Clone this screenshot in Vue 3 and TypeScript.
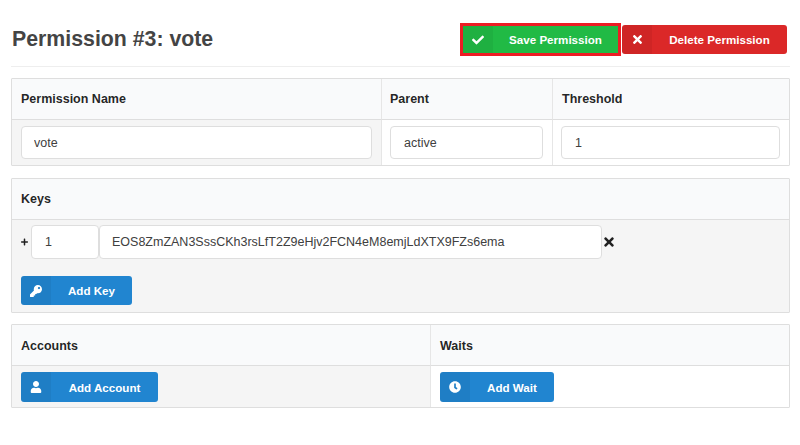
<script setup lang="ts">
interface Ic { box: string; d: string }
const check: Ic = { box: '0 0 512 512', d: 'M173.898 439.404l-166.4-166.400c-9.997-9.997-9.997-26.206 0-36.204l36.203-36.204c9.997-9.998 26.207-9.998 36.204 0L192 312.690 432.095 72.596c9.997-9.997 26.207-9.997 36.204 0l36.203 36.204c9.997 9.997 9.997 26.206 0 36.204l-294.400 294.401c-9.998 9.997-26.207 9.997-36.204-.001z' }
const times: Ic = { box: '0 0 352 512', d: 'M242.720 256l100.070-100.070c12.280-12.280 12.280-32.190 0-44.480l-22.240-22.240c-12.280-12.280-32.190-12.280-44.480 0L176 189.280 75.930 89.210c-12.280-12.280-32.190-12.280-44.480 0L9.210 111.450c-12.280 12.280-12.280 32.190 0 44.480L109.280 256 9.210 356.070c-12.280 12.280-12.280 32.190 0 44.480l22.240 22.240c12.280 12.280 32.200 12.280 44.480 0L176 322.720l100.070 100.070c12.280 12.280 32.200 12.280 44.480 0l22.240-22.240c12.280-12.280 12.280-32.190 0-44.480L242.720 256z' }
const key: Ic = { box: '0 0 512 512', d: 'M512 176.001C512 273.203 433.202 352 336 352c-11.22 0-22.19-1.062-32.827-3.069l-24.012 27.014A23.999 23.999 0 0 1 261.223 384H224v40c0 13.255-10.745 24-24 24h-40v40c0 13.255-10.745 24-24 24H24c-13.255 0-24-10.745-24-24v-78.059c0-6.365 2.529-12.47 7.029-16.971l161.802-161.802C163.108 213.814 160 195.271 160 176 160 78.798 238.797.001 335.999 0 433.488-.001 512 78.511 512 176.001zM336 128c0 26.510 21.490 48 48 48s48-21.490 48-48-21.490-48-48-48-48 21.490-48 48z' }
const user: Ic = { box: '0 0 448 512', d: 'M224 256c70.700 0 128-57.300 128-128S294.700 0 224 0 96 57.300 96 128s57.300 128 128 128zm89.600 32h-16.700c-22.200 10.200-46.900 16-72.900 16s-50.600-5.800-72.900-16h-16.700C60.200 288 0 348.200 0 422.400V464c0 26.500 21.500 48 48 48h352c26.500 0 48-21.500 48-48v-41.600c0-74.200-60.200-134.400-134.400-134.400z' }
const clock: Ic = { box: '0 0 512 512', d: 'M256 8C119 8 8 119 8 256s111 248 248 248 248-111 248-248S393 8 256 8zm57.100 350.100L224.900 294c-3.100-2.300-4.900-5.900-4.900-9.700V116c0-6.600 5.400-12 12-12h48c6.600 0 12 5.400 12 12v137.700l63.500 46.200c5.400 3.900 6.500 11.400 2.600 16.800l-28.200 38.800c-3.900 5.300-11.400 6.500-16.800 2.600z' }
const plus: Ic = { box: '0 0 448 512', d: 'M416 208H272V64c0-17.670-14.330-32-32-32h-32c-17.670 0-32 14.330-32 32v144H32c-17.670 0-32 14.330-32 32v32c0 17.670 14.330 32 32 32h144v144c0 17.670 14.330 32 32 32h32c17.670 0 32-14.330 32-32V304h144c17.670 0 32-14.330 32-32v-32c0-17.670-14.330-32-32-32z' }
</script>

<template>
  <div class="page">
    <header class="top">
      <h1 class="title">Permission #3: vote</h1>
      <div class="actions">
        <button class="btn green save" type="button">
          <span class="ico"><svg width="12" height="12" :viewBox="check.box"><path :d="check.d" fill="currentColor" /></svg></span>
          <span class="lbl">Save Permission</span>
        </button>
        <button class="btn red delete" type="button">
          <span class="ico"><svg width="9" height="13" :viewBox="times.box"><path :d="times.d" fill="currentColor" /></svg></span>
          <span class="lbl">Delete Permission</span>
        </button>
      </div>
    </header>

    <section class="panel grid-3">
      <div class="head">Permission Name</div>
      <div class="head sep parent">Parent</div>
      <div class="head sep">Threshold</div>
      <div class="cell shade"><input class="field" value="vote" readonly /></div>
      <div class="cell sep"><input class="field wide-pad" value="active" readonly /></div>
      <div class="cell sep"><input class="field wide-pad" value="1" readonly /></div>
    </section>

    <section class="panel keys">
      <div class="head">Keys</div>
      <div class="keys-body shade">
        <div class="key-row">
          <svg class="plus" width="7" height="8" :viewBox="plus.box"><path :d="plus.d" fill="currentColor" /></svg>
          <input class="field weight wide-pad" value="1" readonly />
          <input class="field pub" value="EOS8ZmZAN3SssCKh3rsLfT2Z9eHjv2FCN4eM8emjLdXTX9FZs6ema" readonly />
          <svg class="remove" width="10" height="14" :viewBox="times.box"><path :d="times.d" fill="currentColor" /></svg>
        </div>
        <button class="btn blue add-key" type="button">
          <span class="ico"><svg width="12" height="12" :viewBox="key.box"><path :d="key.d" fill="currentColor" /></svg></span>
          <span class="lbl">Add Key</span>
        </button>
      </div>
    </section>

    <section class="panel grid-2">
      <div class="head low-head">Accounts</div>
      <div class="head low-head sep">Waits</div>
      <div class="cell shade low">
        <button class="btn blue add-account" type="button">
          <span class="ico"><svg width="12" height="12" :viewBox="user.box"><path :d="user.d" fill="currentColor" /></svg></span>
          <span class="lbl">Add Account</span>
        </button>
      </div>
      <div class="cell sep low wait">
        <button class="btn blue add-wait" type="button">
          <span class="ico"><svg width="12" height="12" :viewBox="clock.box"><path :d="clock.d" fill="currentColor" /></svg></span>
          <span class="lbl">Add Wait</span>
        </button>
      </div>
    </section>
  </div>
</template>

<style>
html, body { margin: 0; background: #fff; }
</style>

<style scoped>
.page {
  box-sizing: border-box;
  width: 800px;
  height: 445px;
  padding: 0 10px 0 11px;
  font-family: "Liberation Sans", Arial, sans-serif;
  color: rgba(0, 0, 0, 0.87);
  overflow: hidden;
}
.top {
  display: flex;
  align-items: center;
  justify-content: space-between;
  box-sizing: content-box;
  height: 55px;
  padding-top: 11px;
  border-bottom: 1px solid #eeeeee;
  margin-bottom: 11px;
}
.title {
  margin: 0 0 0 1px;
  font-size: 21.3px;
  font-weight: 700;
  line-height: 26px;
  color: #444444;
}
.actions {
  display: flex;
  align-items: center;
  gap: 4px;
  margin-right: 3px;
  margin-top: 2px;
}
.btn {
  display: flex;
  align-items: stretch;
  padding: 0;
  border: 0;
  border-radius: 3px;
  color: #fff;
  font-family: inherit;
  font-size: 11.6px;
  font-weight: 700;
  height: 29px;
  cursor: pointer;
}
.ico {
  flex: none;
  width: 30px;
  display: flex;
  align-items: center;
  justify-content: center;
  background: rgba(0, 0, 0, 0.05);
  border-radius: 3px 0 0 3px;
}
.lbl {
  flex: 1;
  display: flex;
  align-items: center;
  justify-content: center;
}
.green { background: #21ba45; }
.red { background: #db2828; }
.blue { background: #2185d0; }
.save {
  width: 155px;
  height: 27px;
  border-radius: 0;
  outline: 3px solid #ed1c24;
}
.save .ico { border-radius: 0; }
.delete { width: 165px; }
.add-key { width: 111px; }
.add-account { width: 137px; height: 30px; }
.add-wait { width: 114px; height: 30px; }

.panel {
  border: 1px solid #dedede;
  border-radius: 1px;
  margin-bottom: 12px;
}
.keys { margin-bottom: 11px; }
.grid-3 { display: grid; grid-template-columns: 369px 171px 1fr; }
.grid-2 { display: grid; grid-template-columns: 418px 1fr; }
.head {
  box-sizing: border-box;
  height: 41px;
  padding: 0 9px;
  display: flex;
  align-items: center;
  background: #f9fafb;
  border-bottom: 1px solid #dedede;
  font-size: 12.5px;
  font-weight: 700;
}
.low-head { padding-top: 1px; }
.parent { padding-left: 8px; }
.sep { border-left: 1px solid #e6e6e6; }
.cell {
  box-sizing: border-box;
  height: 45px;
  padding: 6px 9px;
}
.cell.sep { padding-left: 8px; }
.cell.low { height: 41px; padding-top: 6px; }
.cell.wait { padding-left: 9px; }
.shade { background: #f5f5f5; }
.field {
  box-sizing: border-box;
  display: block;
  width: 100%;
  height: 33px;
  padding: 0 12px;
  border: 1px solid #dedede;
  border-radius: 4px;
  background: #fff;
  font-family: inherit;
  font-size: 12.5px;
  color: #404040;
  outline: none;
}
.wide-pad { padding-left: 13px; }
.keys-body {
  box-sizing: border-box;
  height: 92px;
  padding: 5px 9px 0;
}
.key-row {
  display: flex;
  align-items: center;
  height: 34px;
  margin-bottom: 17px;
}
.plus { flex: none; margin-right: 3px; }
.weight { flex: none; width: 68px; height: 34px; }
.pub { flex: none; width: 503px; height: 34px; }
.remove { flex: none; margin: -1px 0 0 2px; }
</style>
